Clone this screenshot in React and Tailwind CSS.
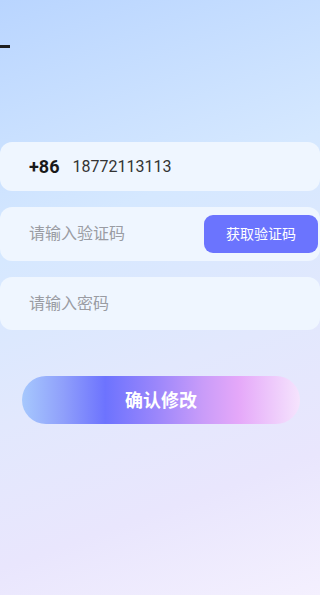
export default function App() {
  return (
    <div
      className="relative h-[595px] w-[320px] overflow-hidden bg-[linear-gradient(160deg,#b9d5ff_0%,#d5e8ff_35%,#e2e8fd_60%,#e9e6fd_80%,#f4f0fe_100%)]"
      style={{ fontFamily: 'Roboto, "Noto Sans CJK SC", sans-serif' }}
    >
      {/* back button, mostly cut off */}
      <div className="absolute left-0 top-[45px] h-[2.5px] w-[10px] bg-[#1f1f1f]" />

      <div className="flex flex-col pt-[142px]">
        <div className="flex h-[49px] items-center rounded-[12px] bg-[#eff6ff] pl-[29px]">
          <span className="text-[18px] font-bold text-[#1a1a1a]">+86</span>
          <span className="ml-[13px] text-[16px] text-[#333]">18772113113</span>
        </div>

        <div className="mt-[16px] flex h-[54px] items-center justify-between rounded-[12px] bg-[#eff6ff] pl-[29px] pr-[2px]">
          <span className="text-[16px] text-[#9a9ca3]">请输入验证码</span>
          <button
            type="button"
            className="flex h-[38px] w-[114px] items-center justify-center rounded-[9px] bg-[#6b74fe] text-[14px] text-white"
          >
            获取验证码
          </button>
        </div>

        <div className="mt-[16px] flex h-[53px] items-center rounded-[12px] bg-[#eff6ff] pl-[29px]">
          <span className="text-[16px] text-[#9a9ca3]">请输入密码</span>
        </div>

        <div className="mt-[46px] pl-[22px]">
          <button
            type="button"
            className="flex h-[48px] w-[278px] items-center justify-center rounded-full bg-[linear-gradient(90deg,#a6c8fd_0%,#8f9ffb_15%,#6d73fe_30%,#9a86fb_48%,#c99cf9_65%,#e5a8f9_78%,#f5e4fd_100%)] text-[18px] font-bold text-white"
          >
            确认修改
          </button>
        </div>
      </div>
    </div>
  );
}
